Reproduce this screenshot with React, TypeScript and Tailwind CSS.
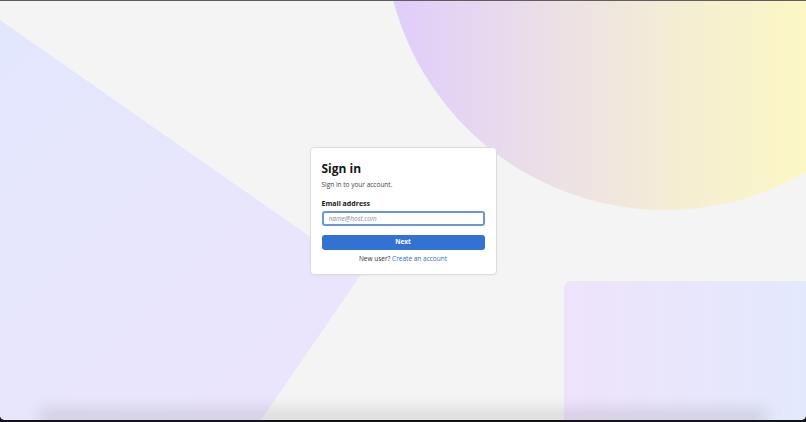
import React from 'react';

const SignInCard: React.FC = () => {
  return (
    <div className="relative z-10 w-[187px] rounded-[4px] border border-[#dcdcdc] bg-white px-[11px] pt-[13px] pb-[10px] shadow-[0_1px_2px_rgba(0,0,0,0.04)]">
      <h1 className="text-[12px] leading-[16px] font-bold text-[#161616]">Sign in</h1>
      <p className="mt-[3px] text-[6.5px] leading-[9px] text-[#444]">Sign in to your account.</p>

      <label className="mt-[10px] block text-[7px] leading-[10px] font-bold text-[#161616]">Email address</label>
      <input
        type="email"
        placeholder="name@host.com"
        className="mt-[2px] block h-[15px] w-full rounded-[3px] border-2 border-[#6a96de] bg-white px-[5px] text-[6.5px] italic text-[#333] outline-none placeholder:text-[#8a8a8a]"
      />

      <button className="mt-[9px] flex h-[15px] w-full items-center justify-center rounded-[3px] bg-[#3371d3] text-[6.5px] font-bold text-white">
        Next
      </button>

      <p className="mt-[4px] text-center text-[6.5px] leading-[10px] text-[#333]">
        New user? <a className="text-[#2f6bcb]">Create an account</a>
      </p>
    </div>
  );
};

export default function App() {
  return (
    <div className="h-[422px] w-[806px] bg-[#141414]" style={{ fontFamily: '"Open Sans", "Noto Sans", sans-serif' }}>
      <div className="relative flex h-[420px] w-full items-center justify-center overflow-hidden rounded-b-[5px] border-t border-[#5e5e5e] bg-[#f4f4f4]">
        {/* left wedge */}
        <div className="absolute inset-0 bg-[linear-gradient(135deg,#e2e7fd_0%,#e9e5fc_45%,#f0e4fb_100%)] [clip-path:polygon(0_19px,362px_272px,261px_100%,0_100%)]" />

        {/* top-right disc */}
        <div className="absolute left-[384px] top-[-353px] h-[562px] w-[562px] rounded-full bg-[linear-gradient(90deg,#dfccfc_0%,#ece0e6_30%,#f5efd2_55%,#fdf8c2_78%)]" />

        {/* bottom-right panel */}
        <div className="absolute left-[564px] top-[280px] h-[160px] w-[260px] rounded-[7px] bg-[linear-gradient(90deg,#eee3fb_0%,#e8e6fc_50%,#e2e9fc_100%)]" />

        {/* bottom shade */}
        <div className="absolute bottom-[-6px] left-[40px] right-[40px] h-[18px] bg-[rgba(0,0,0,0.09)] blur-[7px]" />

        <SignInCard />
      </div>
    </div>
  );
}
